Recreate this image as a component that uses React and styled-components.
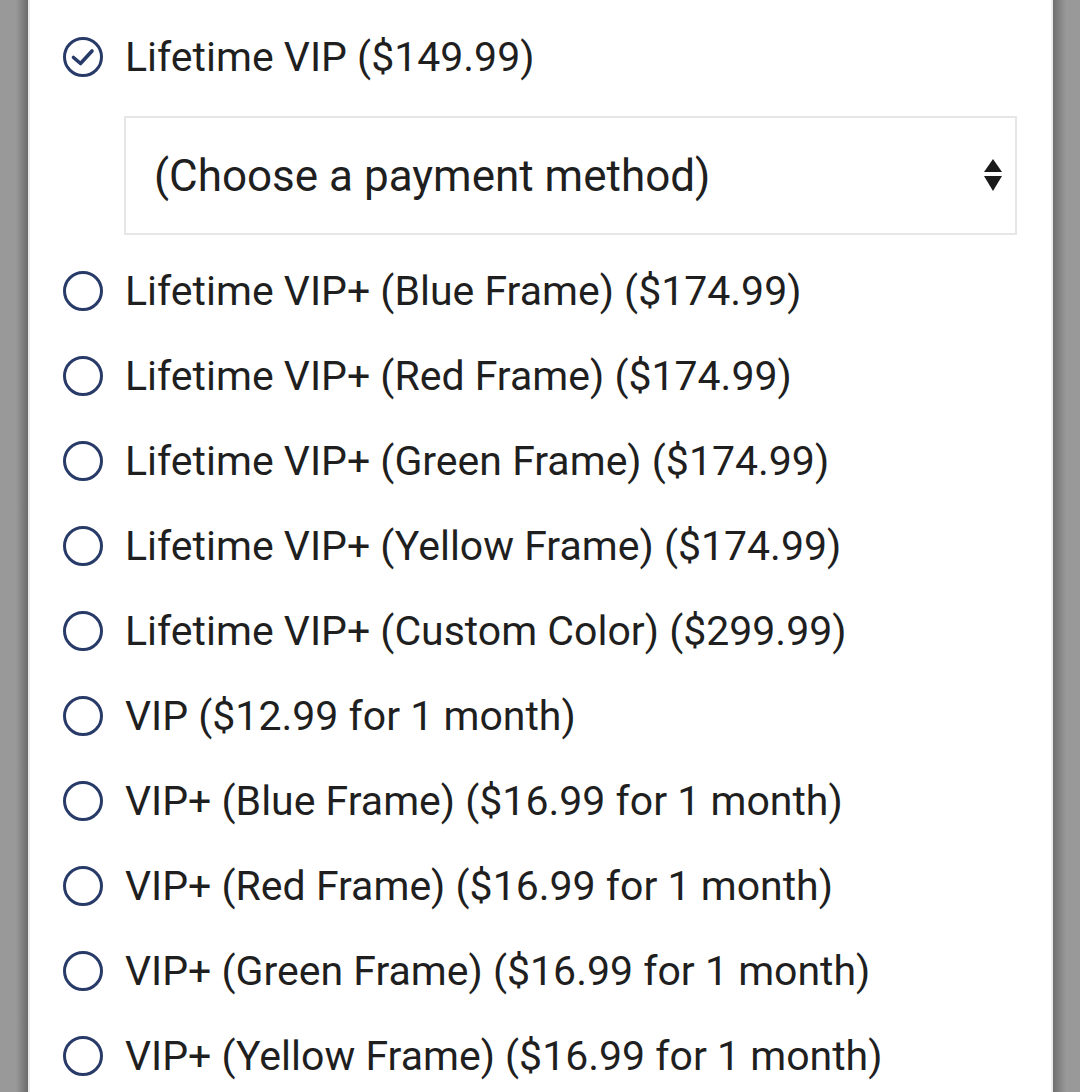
import React from "react";
import styled, { createGlobalStyle } from "styled-components";

const GlobalStyle = createGlobalStyle`
  html, body {
    margin: 0;
    padding: 0;
    height: 100%;
    overflow: hidden;
  }
  body {
    background: #979797;
    font-family: Roboto, "Noto Sans", sans-serif;
  }
`;

const PLANS = [
  "Lifetime VIP+ (Blue Frame) ($174.99)",
  "Lifetime VIP+ (Red Frame) ($174.99)",
  "Lifetime VIP+ (Green Frame) ($174.99)",
  "Lifetime VIP+ (Yellow Frame) ($174.99)",
  "Lifetime VIP+ (Custom Color) ($299.99)",
  "VIP ($12.99 for 1 month)",
  "VIP+ (Blue Frame) ($16.99 for 1 month)",
  "VIP+ (Red Frame) ($16.99 for 1 month)",
  "VIP+ (Green Frame) ($16.99 for 1 month)",
  "VIP+ (Yellow Frame) ($16.99 for 1 month)",
];

function RadioIcon({ checked }) {
  return (
    <svg width="40" height="40" viewBox="0 0 40 40" fill="none">
      <circle cx="20" cy="20" r="18.5" stroke="#283a68" strokeWidth="3" />
      {checked && (
        <path
          d="M10.5 20.5 L17.5 26.5 L29 14"
          stroke="#283a68"
          strokeWidth="3.6"
          strokeLinecap="round"
          strokeLinejoin="round"
        />
      )}
    </svg>
  );
}

function SortArrows() {
  return (
    <svg width="20" height="34" viewBox="0 0 20 34">
      <path d="M10 0 L19 13 L1 13 Z" fill="#1b1b1b" />
      <path d="M1 17 L19 17 L10 32 Z" fill="#1b1b1b" />
    </svg>
  );
}

function App() {
  return (
    <>
      <GlobalStyle />
      <Backdrop>
        <Panel>
          <Option>
            <RadioIcon checked />
            <span>Lifetime VIP ($149.99)</span>
          </Option>
          <SelectWrap>
            <Select defaultValue="">
              <option value="">(Choose a payment method)</option>
              <option value="card">Credit card</option>
              <option value="paypal">PayPal</option>
            </Select>
            <ArrowSlot>
              <SortArrows />
            </ArrowSlot>
          </SelectWrap>
          {PLANS.map((plan) => (
            <Option key={plan}>
              <RadioIcon />
              <span>{plan}</span>
            </Option>
          ))}
        </Panel>
      </Backdrop>
    </>
  );
}

const Backdrop = styled.div`
  height: 100vh;
  padding: 0 27px 0 28px;
  background:
    linear-gradient(90deg, rgba(0, 0, 0, 0) 0, rgba(0, 0, 0, 0) 16px, rgba(0, 0, 0, 0.3) 28px, transparent 28px),
    linear-gradient(270deg, rgba(0, 0, 0, 0) 0, rgba(0, 0, 0, 0) 14px, rgba(0, 0, 0, 0.28) 27px, transparent 27px),
    #999;
`;

const Panel = styled.div`
  height: 100%;
  background: #fff;
  border-left: 2px solid #ececec;
  border-right: 2px solid #ececec;
  padding: 14px 34px 0 33px;
  display: flex;
  flex-direction: column;
`;

const Option = styled.label`
  display: flex;
  align-items: center;
  gap: 22px;
  height: 85px;
  flex-shrink: 0;
  font-size: 41px;
  color: #1f1f1f;
  cursor: pointer;

  svg {
    flex-shrink: 0;
  }
`;

const SelectWrap = styled.div`
  position: relative;
  margin: 17px 0 13px 61px;
  flex-shrink: 0;
`;

const Select = styled.select`
  appearance: none;
  width: 100%;
  height: 119px;
  border: 2px solid #e6e6e6;
  border-radius: 0;
  background: #fff;
  padding: 0 70px 0 28px;
  font-family: Roboto, "Noto Sans", sans-serif;
  font-size: 44px;
  color: #1f1f1f;
  outline: none;
`;

const ArrowSlot = styled.span`
  position: absolute;
  right: 14px;
  top: 43px;
  pointer-events: none;
  display: flex;
`;

export default App;
